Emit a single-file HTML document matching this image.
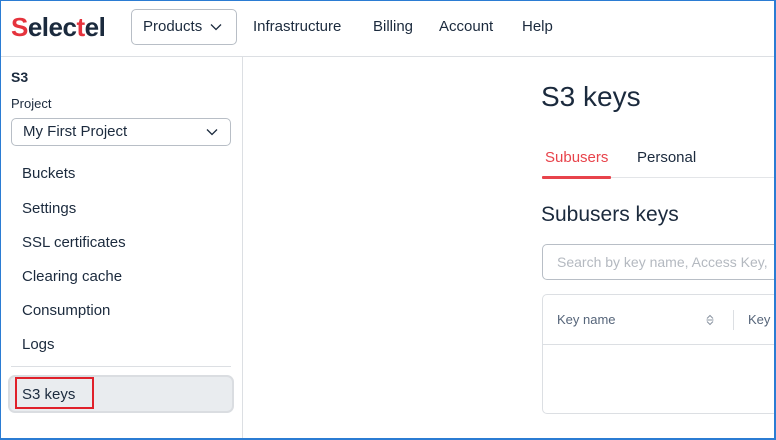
<!DOCTYPE html>
<html><head><meta charset="utf-8"><style>
*{box-sizing:border-box;margin:0;padding:0}
body{width:776px;height:440px;overflow:hidden;background:#fff;font-family:"Liberation Sans",sans-serif;color:#1b2a3d;position:relative}
.frame{position:absolute;inset:0;border:1px solid #2b7cd3;border-right:2px solid #2b7cd3;border-bottom:2px solid #2b7cd3;pointer-events:none;z-index:10}
.a{position:absolute;white-space:nowrap}
.hdr{position:absolute;left:0;top:0;width:776px;height:57px;border-bottom:1px solid #dcdfe3}
.side{position:absolute;left:242px;top:57px;width:1px;height:383px;background:#dcdfe3}
.nav{font-size:15px;top:18px}
.si{font-size:15px;left:22px}
</style></head><body>
<div class="hdr"></div>
<div class="a" style="left:11px;top:12px;font-size:26px;font-weight:bold;letter-spacing:-0.5px;color:#1b2a3d"><span style="color:#e5333d">S</span>elec<span style="color:#e5333d">t</span>el</div>
<div class="a" style="left:131px;top:9px;width:106px;height:36px;border:1px solid #b8bec6;border-radius:5px"></div>
<div class="a nav" style="left:143px">Products</div>
<svg class="a" style="left:210px;top:23px" width="12" height="8" viewBox="0 0 12 8"><path d="M1 1.5L6 6.5L11 1.5" fill="none" stroke="#1b2a3d" stroke-width="1.3"/></svg>
<div class="a nav" style="left:253px">Infrastructure</div>
<div class="a nav" style="left:373px">Billing</div>
<div class="a nav" style="left:439px">Account</div>
<div class="a nav" style="left:522px">Help</div>
<div class="side"></div>
<div class="a" style="left:11px;top:69px;font-size:14px;font-weight:bold">S3</div>
<div class="a" style="left:11px;top:96px;font-size:13px">Project</div>
<div class="a" style="left:11px;top:118px;width:220px;height:28px;border:1px solid #b8bec6;border-radius:5px"></div>
<div class="a" style="left:23px;top:123px;font-size:15px">My First Project</div>
<svg class="a" style="left:206px;top:128px" width="12" height="8" viewBox="0 0 12 8"><path d="M1 1.5L6 6.5L11 1.5" fill="none" stroke="#1b2a3d" stroke-width="1.3"/></svg>
<div class="a si" style="top:165px">Buckets</div>
<div class="a si" style="top:200px">Settings</div>
<div class="a si" style="top:234px">SSL certificates</div>
<div class="a si" style="top:268px">Clearing cache</div>
<div class="a si" style="top:302px">Consumption</div>
<div class="a si" style="top:336px">Logs</div>
<div class="a" style="left:11px;top:366px;width:220px;height:1px;background:#dcdfe3"></div>
<div class="a" style="left:8px;top:375px;width:226px;height:38px;background:#e9ecef;border:2px solid #dadde1;border-radius:7px"></div>
<div class="a" style="left:15px;top:377px;width:79px;height:32px;border:2px solid #e0202a"></div>
<div class="a si" style="top:386px">S3 keys</div>
<div class="a" style="left:541px;top:81px;font-size:28px">S3 keys</div>
<div class="a" style="left:545px;top:149px;font-size:15px;color:#e8434b">Subusers</div>
<div class="a" style="left:637px;top:149px;font-size:15px">Personal</div>
<div class="a" style="left:542px;top:177px;width:234px;height:1px;background:#e3e5e8"></div>
<div class="a" style="left:542px;top:176px;width:69px;height:3px;background:#e8434b;border-radius:1px"></div>
<div class="a" style="left:541px;top:203px;font-size:21px">Subusers keys</div>
<div class="a" style="left:542px;top:244px;width:250px;height:36px;border:1px solid #b8bec6;border-radius:5px"></div>
<div class="a" style="left:557px;top:254px;font-size:14px;color:#b4b9c0">Search by key name, Access Key,</div>
<div class="a" style="left:542px;top:294px;width:250px;height:120px;border:1px solid #dcdfe3;border-radius:5px"></div>
<div class="a" style="left:542px;top:344px;width:234px;height:1px;background:#dcdfe3"></div>
<div class="a" style="left:557px;top:312px;font-size:13px;color:#56657a">Key name</div>
<svg class="a" style="left:705px;top:313px" width="10" height="14" viewBox="0 0 10 14"><path d="M2 5.5L5 2.5L8 5.5M1.5 7H8.5M2 8.5L5 11.5L8 8.5" fill="none" stroke="#8a94a1" stroke-width="1"/></svg>
<div class="a" style="left:733px;top:310px;width:1px;height:20px;background:#dcdfe3"></div>
<div class="a" style="left:748px;top:312px;font-size:13px;color:#56657a">Key c</div>
<div class="frame"></div>
</body></html>
